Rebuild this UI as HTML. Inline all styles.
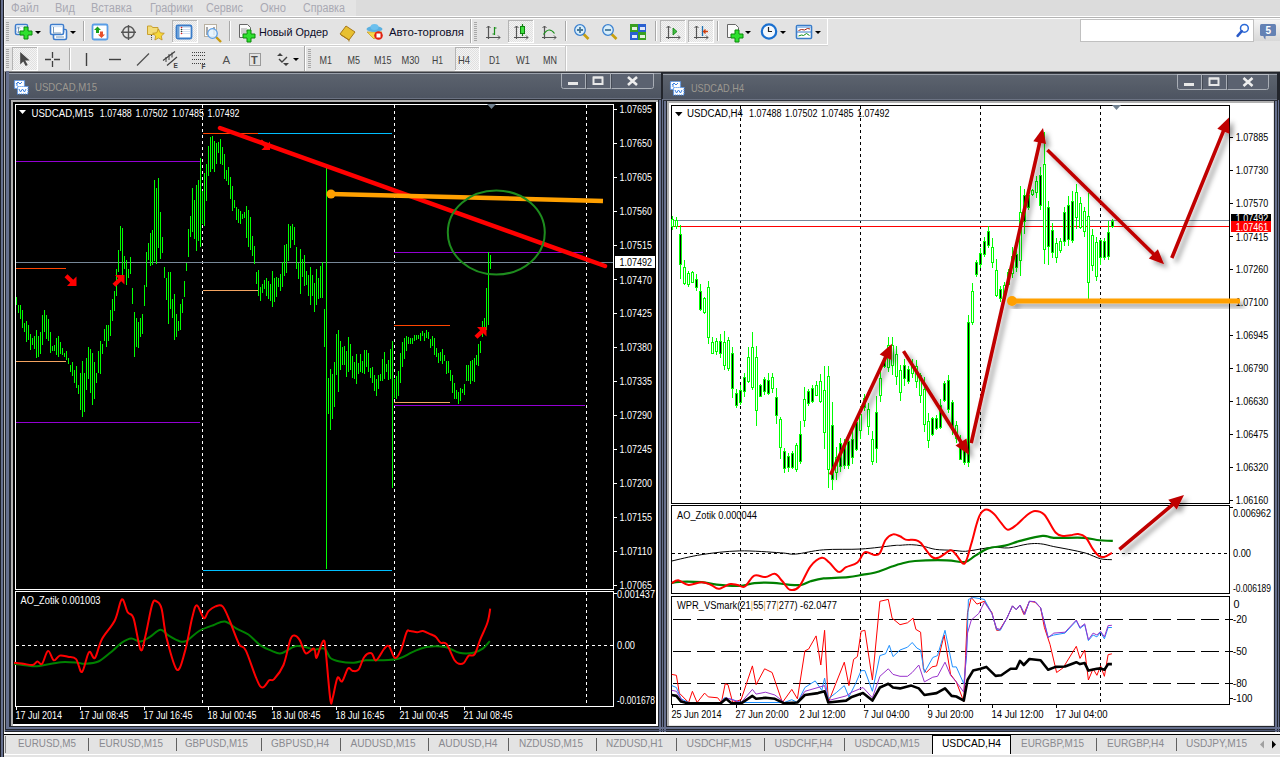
<!DOCTYPE html>
<html><head><meta charset="utf-8"><style>
html,body{margin:0;padding:0;width:1280px;height:757px;overflow:hidden;background:#e3e3e3}
svg{display:block;font-family:"Liberation Sans", sans-serif}
</style></head><body>
<svg width="1280" height="757" viewBox="0 0 1280 757">
<rect x="0" y="0" width="1280" height="757" fill="#e3e3e3" />
<rect x="0" y="0" width="1280" height="16" fill="#e4e4e4" />
<rect x="356" y="0" width="924" height="16" fill="#dcdcdc" />
<text x="11" y="12" fill="#a9a9b3" font-size="12.5" textLength="28" lengthAdjust="spacingAndGlyphs">Файл</text>
<text x="55" y="12" fill="#a9a9b3" font-size="12.5" textLength="20" lengthAdjust="spacingAndGlyphs">Вид</text>
<text x="91" y="12" fill="#a9a9b3" font-size="12.5" textLength="41" lengthAdjust="spacingAndGlyphs">Вставка</text>
<text x="150" y="12" fill="#a9a9b3" font-size="12.5" textLength="43" lengthAdjust="spacingAndGlyphs">Графики</text>
<text x="206" y="12" fill="#a9a9b3" font-size="12.5" textLength="37" lengthAdjust="spacingAndGlyphs">Сервис</text>
<text x="260" y="12" fill="#a9a9b3" font-size="12.5" textLength="26" lengthAdjust="spacingAndGlyphs">Окно</text>
<text x="303" y="12" fill="#a9a9b3" font-size="12.5" textLength="42" lengthAdjust="spacingAndGlyphs">Справка</text>
<line x1="0" y1="16.5" x2="1280" y2="16.5" stroke="#ffffff" stroke-width="1" />
<rect x="0" y="17" width="1280" height="54" fill="#e3e3e3" />
<line x1="827.5" y1="17" x2="827.5" y2="45" stroke="#ffffff" stroke-width="1" />
<line x1="4" y1="44.5" x2="828" y2="44.5" stroke="#ffffff" stroke-width="1" />
<line x1="4" y1="45.5" x2="828" y2="45.5" stroke="#d0d0d0" stroke-width="1" />
<line x1="4" y1="46.5" x2="566" y2="46.5" stroke="#ffffff" stroke-width="1" />
<line x1="566.5" y1="46" x2="566.5" y2="71" stroke="#ffffff" stroke-width="1" />
<line x1="565.5" y1="46" x2="565.5" y2="71" stroke="#c8c8c8" stroke-width="1" />
<line x1="0" y1="71.5" x2="1280" y2="71.5" stroke="#9c9c9c" stroke-width="1" />
<line x1="0" y1="72.5" x2="1280" y2="72.5" stroke="#6a6a6a" stroke-width="1" />
<rect x="0" y="0" width="4" height="757" fill="#1e1f24" />
<rect x="1" y="0" width="2" height="757" fill="#66708e" />
<line x1="4.5" y1="0" x2="4.5" y2="71" stroke="#f4f4f4" stroke-width="1" />
<line x1="4" y1="17.5" x2="1280" y2="17.5" stroke="#b4b4b4" stroke-width="1" />
<line x1="4" y1="18.5" x2="828" y2="18.5" stroke="#ffffff" stroke-width="1" />
<rect x="0" y="71" width="1280" height="664" fill="#22252c" />
<line x1="0" y1="71.5" x2="1280" y2="71.5" stroke="#8c8c8c" stroke-width="1" />
<line x1="4.5" y1="71" x2="4.5" y2="733" stroke="#b0b0b0" stroke-width="1" />
<line x1="6.5" y1="71" x2="6.5" y2="729" stroke="#66708e" stroke-width="1" />
<line x1="7.5" y1="71" x2="7.5" y2="729" stroke="#66708e" stroke-width="1" />
<line x1="8.5" y1="71" x2="8.5" y2="729" stroke="#66708e" stroke-width="1" />
<line x1="659.5" y1="99" x2="659.5" y2="732" stroke="#66708e" stroke-width="1" />
<line x1="660.5" y1="99" x2="660.5" y2="732" stroke="#66708e" stroke-width="1" />
<line x1="662.5" y1="99" x2="662.5" y2="732" stroke="#66708e" stroke-width="1" />
<line x1="664.5" y1="99" x2="664.5" y2="732" stroke="#66708e" stroke-width="1" />
<line x1="665.5" y1="99" x2="665.5" y2="732" stroke="#66708e" stroke-width="1" />
<line x1="1275.5" y1="100" x2="1275.5" y2="732" stroke="#66708e" stroke-width="1" />
<line x1="1276.5" y1="100" x2="1276.5" y2="732" stroke="#66708e" stroke-width="1" />
<line x1="1278.5" y1="100" x2="1278.5" y2="732" stroke="#66708e" stroke-width="1" />
<line x1="6" y1="727.5" x2="1280" y2="727.5" stroke="#66708e" stroke-width="1" />
<line x1="6" y1="728.5" x2="1280" y2="728.5" stroke="#66708e" stroke-width="1" />
<line x1="5" y1="730.5" x2="1280" y2="730.5" stroke="#4c5470" stroke-width="1" />
<line x1="4" y1="732.5" x2="1280" y2="732.5" stroke="#ffffff" stroke-width="1" />
<line x1="4" y1="733.5" x2="1280" y2="733.5" stroke="#ffffff" stroke-width="1" />
<line x1="4" y1="734.5" x2="1280" y2="734.5" stroke="#000000" stroke-width="1" />
<defs><linearGradient id="tg9" x1="0" y1="0" x2="0" y2="1"><stop offset="0" stop-color="#5c636e"/><stop offset="1" stop-color="#4d5461"/></linearGradient></defs>
<line x1="9" y1="72.5" x2="661" y2="72.5" stroke="#3a3d44" stroke-width="1" />
<line x1="9" y1="73.5" x2="661" y2="73.5" stroke="#9aa0aa" stroke-width="1" />
<rect x="9" y="74" width="652" height="24" fill="url(#tg9)" />
<line x1="9" y1="98.5" x2="661" y2="98.5" stroke="#6b7282" stroke-width="1" />
<line x1="9" y1="99.5" x2="661" y2="99.5" stroke="#2c3038" stroke-width="1" />
<rect x="14.5" y="80.5" width="10" height="8" fill="#ffffff" stroke="#4a90f0" stroke-width="1.2" stroke-dasharray="1.2,0.8"/>
<path d="M16,84 l2,-2 l2,2 l2,-2 M17,83 v3" stroke="#3a80e0" stroke-width="1" fill="none"/>
<rect x="17.5" y="86.5" width="10.5" height="7.5" fill="#ffffff" stroke="#4a90f0" stroke-width="1.2" stroke-dasharray="1.2,0.8"/>
<polyline points="19,89 20.5,92 22.5,89 24.5,92 26,89" fill="none" stroke="#3a80e0" stroke-width="1"/>
<text x="35" y="91" fill="#9c9890" font-size="11.5" textLength="62" lengthAdjust="spacingAndGlyphs">USDCAD,M15</text>
<path d="M561.5,73 V86.5 q0,2 2,2 H651.5 q2,0 2,-2 V73" fill="#5b6270" stroke="#a9aeb6" stroke-width="1"/>
<path d="M561,73.5 H654" stroke="#b8bcc4" stroke-width="1"/>
<path d="M585.5,73 V88.5 M610.5,73 V88.5" stroke="#a9aeb6" stroke-width="1"/>
<path d="M586.5,74 V88.5 M611.5,74 V88.5" stroke="#454b56" stroke-width="1"/>
<rect x="568" y="82" width="10" height="3" fill="#e8e8e8" />
<rect x="593.5" y="77.5" width="9" height="6.5" fill="none" stroke="#e8e8e8" stroke-width="2"/>
<rect x="593" y="76.5" width="10" height="2" fill="#e8e8e8"/>
<path d="M628.0,77 L637.0,85 M637.0,77 L628.0,85" stroke="#eeeeee" stroke-width="2.6"/>
<defs><linearGradient id="tg663" x1="0" y1="0" x2="0" y2="1"><stop offset="0" stop-color="#5c636e"/><stop offset="1" stop-color="#4d5461"/></linearGradient></defs>
<line x1="663" y1="73.5" x2="1277" y2="73.5" stroke="#3a3d44" stroke-width="1" />
<line x1="663" y1="74.5" x2="1277" y2="74.5" stroke="#9aa0aa" stroke-width="1" />
<rect x="663" y="75" width="614" height="24" fill="url(#tg663)" />
<line x1="663" y1="99.5" x2="1277" y2="99.5" stroke="#6b7282" stroke-width="1" />
<line x1="663" y1="100.5" x2="1277" y2="100.5" stroke="#2c3038" stroke-width="1" />
<rect x="670.5" y="81.5" width="10" height="8" fill="#ffffff" stroke="#4a90f0" stroke-width="1.2" stroke-dasharray="1.2,0.8"/>
<path d="M672,85 l2,-2 l2,2 l2,-2 M673,84 v3" stroke="#3a80e0" stroke-width="1" fill="none"/>
<rect x="673.5" y="87.5" width="10.5" height="7.5" fill="#ffffff" stroke="#4a90f0" stroke-width="1.2" stroke-dasharray="1.2,0.8"/>
<polyline points="675,90 676.5,93 678.5,90 680.5,93 682,90" fill="none" stroke="#3a80e0" stroke-width="1"/>
<text x="691" y="92" fill="#9c9890" font-size="11.5" textLength="53" lengthAdjust="spacingAndGlyphs">USDCAD,H4</text>
<path d="M1177.5,74 V87.5 q0,2 2,2 H1266.5 q2,0 2,-2 V74" fill="#5b6270" stroke="#a9aeb6" stroke-width="1"/>
<path d="M1177,74.5 H1269" stroke="#b8bcc4" stroke-width="1"/>
<path d="M1201.5,74 V89.5 M1226.5,74 V89.5" stroke="#a9aeb6" stroke-width="1"/>
<path d="M1202.5,75 V89.5 M1227.5,75 V89.5" stroke="#454b56" stroke-width="1"/>
<rect x="1184" y="83" width="10" height="3" fill="#e8e8e8" />
<rect x="1209.5" y="78.5" width="9" height="6.5" fill="none" stroke="#e8e8e8" stroke-width="2"/>
<rect x="1209" y="77.5" width="10" height="2" fill="#e8e8e8"/>
<path d="M1243.5,78 L1252.5,86 M1252.5,78 L1243.5,86" stroke="#eeeeee" stroke-width="2.6"/>
<rect x="11" y="100" width="647" height="626" fill="#b0b0b0" />
<rect x="13" y="102" width="645" height="624" fill="#ffffff" />
<rect x="13" y="102" width="643" height="622" fill="#000000" />
<rect x="667" y="101" width="607" height="625" fill="#b0b0b0" />
<rect x="669" y="103" width="605" height="623" fill="#e4e4e4" />
<rect x="669" y="103" width="604" height="622" fill="#ffffff" />
<defs><pattern id="chk" width="2" height="2" patternUnits="userSpaceOnUse"><rect width="2" height="2" fill="#f4f4f4"/><rect width="1" height="1" fill="#e0e0e0"/><rect x="1" y="1" width="1" height="1" fill="#e0e0e0"/></pattern></defs>
<rect x="6" y="22" width="3" height="1" fill="#a8a8a8"/>
<rect x="6" y="24" width="3" height="1" fill="#a8a8a8"/>
<rect x="6" y="26" width="3" height="1" fill="#a8a8a8"/>
<rect x="6" y="28" width="3" height="1" fill="#a8a8a8"/>
<rect x="6" y="30" width="3" height="1" fill="#a8a8a8"/>
<rect x="6" y="32" width="3" height="1" fill="#a8a8a8"/>
<rect x="6" y="34" width="3" height="1" fill="#a8a8a8"/>
<rect x="6" y="36" width="3" height="1" fill="#a8a8a8"/>
<rect x="6" y="38" width="3" height="1" fill="#a8a8a8"/>
<rect x="6" y="40" width="3" height="1" fill="#a8a8a8"/>
<rect x="15.5" y="24.5" width="12" height="10" rx="1.5" fill="#ffffff" stroke="#3d7ccc" stroke-width="1.6"/>
<rect x="16.5" y="25.2" width="10" height="2" fill="#cfe2f7"/>
<path d="M18.5,27 v6 M17,28.5 l1.5,-1.5 l1.5,1.5 M17,31.5 l1.5,1.5 l1.5,-1.5" stroke="#7a9ab8" stroke-width="1" fill="none"/>
<path d="M24.0,27 h4.0 v4.0 h4.0 v4.0 h-4.0 v4.0 h-4.0 v-4.0 h-4.0 v-4.0 h4.0 z" fill="#2ee02e" stroke="#0a8a0a" stroke-width="1"/>
<path d="M35,31 h6 l-3,3 z" fill="#000"/>
<rect x="53.5" y="29.5" width="13" height="10" rx="1.5" fill="#ffffff" stroke="#3d7ccc" stroke-width="1.6"/>
<rect x="54.5" y="30.2" width="11" height="2" fill="#cfe2f7"/>
<rect x="50.5" y="24.5" width="13" height="10" rx="1.5" fill="#ffffff" stroke="#3d7ccc" stroke-width="1.6"/>
<rect x="51.5" y="25.2" width="11" height="2" fill="#cfe2f7"/>
<path d="M53,33 h8 M53.5,27 v6" stroke="#7a9ab8" stroke-width="1"/><path d="M56,37 h8" stroke="#7a9ab8" stroke-width="1"/>
<path d="M70,31 h6 l-3,3 z" fill="#000"/>
<line x1="83.5" y1="21" x2="83.5" y2="41" stroke="#a8a8a8" stroke-width="1" />
<line x1="84.5" y1="21" x2="84.5" y2="41" stroke="#ffffff" stroke-width="1" />
<rect x="92.5" y="24.5" width="15" height="15" rx="1.5" fill="#fff" stroke="#5a9ee6" stroke-width="1.8"/>
<path d="M97.5,26.5 l-3.5,3.5 h2 v3 h3 v-3 h2 z" fill="#1aa01a"/><path d="M101.5,38 l3.5,-3.5 h-2 v-3 h-3 v3 h-2 z" fill="#e8502a"/>
<circle cx="128.5" cy="32.3" r="5.8" fill="none" stroke="#555" stroke-width="1.4"/><path d="M128.5,25 v15 M121,32.3 h15" stroke="#555" stroke-width="1.4"/>
<path d="M147.5,26 h4 l1,1.5 h5.5 v7 h-10.5 z" fill="#f3dc78" stroke="#c8a030" stroke-width="1"/>
<path d="M158.5,29 l1.8,3.8 l4,0.5 l-3,2.7 l0.8,4 l-3.6,-2 l-3.6,2 l0.8,-4 l-3,-2.7 l4,-0.5 z" fill="#f6d83a" stroke="#c09020" stroke-width="0.8"/>
<path d="M151.5,35 v5" stroke="#333" stroke-width="1" stroke-dasharray="1,1.2"/>
<rect x="172" y="20" width="25" height="22" fill="url(#chk)"/>
<line x1="172" y1="20.5" x2="197" y2="20.5" stroke="#b4b4b4" stroke-width="1" />
<line x1="172.5" y1="20" x2="172.5" y2="42" stroke="#b4b4b4" stroke-width="1" />
<line x1="172" y1="42.5" x2="198" y2="42.5" stroke="#ffffff" stroke-width="1" />
<line x1="197.5" y1="20" x2="197.5" y2="43" stroke="#ffffff" stroke-width="1" />
<rect x="176.5" y="25.5" width="15" height="13" rx="1.5" fill="#fff" stroke="#3a7cc8" stroke-width="1.8"/><rect x="177" y="26" width="2.5" height="12" fill="#6a9fd8"/>
<path d="M181,27.5 h9 M181,29.5 h9 M181,31.5 h9 M181,33.5 h9" stroke="#c8d8f0" stroke-width="0.8"/>
<circle cx="181.5" cy="27.5" r="0.8" fill="#e02020"/>
<circle cx="181.5" cy="29.5" r="0.8" fill="#304030"/>
<circle cx="181.5" cy="31.5" r="0.8" fill="#304030"/>
<circle cx="181.5" cy="33.5" r="0.8" fill="#e02020"/>
<rect x="204.5" y="24.5" width="12" height="12" fill="#fafafa" stroke="#b8b0a0" stroke-width="1"/><path d="M207,27 v8 M214,27 v8" stroke="#555" stroke-width="1"/>
<path d="M216,37 l5,5" stroke="#c89a10" stroke-width="2.4"/><circle cx="212.5" cy="33.5" r="4.8" fill="#e4f2fb" fill-opacity="0.85" stroke="#5a9ee6" stroke-width="1.2"/>
<line x1="229.5" y1="21" x2="229.5" y2="41" stroke="#a8a8a8" stroke-width="1" />
<line x1="230.5" y1="21" x2="230.5" y2="41" stroke="#ffffff" stroke-width="1" />
<path d="M239.5,24.5 h8 l3,3 v10 h-11 z" fill="#fafafa" stroke="#666" stroke-width="1"/><path d="M241,29 h6 M241,31 h6 M241,33 h5" stroke="#888" stroke-width="0.8"/>
<path d="M247.0,30 h4.0 v4.0 h4.0 v4.0 h-4.0 v4.0 h-4.0 v-4.0 h-4.0 v-4.0 h4.0 z" fill="#2ee02e" stroke="#0a8a0a" stroke-width="1"/>
<text x="259" y="36" fill="#0c0c28" font-size="11" textLength="69" lengthAdjust="spacingAndGlyphs">Новый Ордер</text>
<path d="M340,34 l6,-8 l9,6 l-6,8 z" fill="#e8c030" stroke="#a87818" stroke-width="1"/><path d="M341,35 l8,5 l0,1.5" stroke="#a87818" fill="none"/>
<path d="M367,32 l7,7 l8,-7 z" fill="#f5d84a" stroke="#c8a030" stroke-width="0.8"/><ellipse cx="374.5" cy="29" rx="8" ry="3" fill="#5ab0e0"/><ellipse cx="374.5" cy="27" rx="4" ry="3" fill="#6cc0ee"/>
<circle cx="378.5" cy="35.5" r="4.3" fill="#e02010"/><rect x="376.5" y="33.5" width="4" height="4" fill="#fff"/>
<text x="389" y="36" fill="#0c0c28" font-size="11" textLength="75" lengthAdjust="spacingAndGlyphs">Авто-торговля</text>
<line x1="470.5" y1="19" x2="470.5" y2="43" stroke="#a8a8a8" stroke-width="1" />
<line x1="471.5" y1="19" x2="471.5" y2="43" stroke="#ffffff" stroke-width="1" />
<rect x="474" y="22" width="3" height="1" fill="#a8a8a8"/>
<rect x="474" y="24" width="3" height="1" fill="#a8a8a8"/>
<rect x="474" y="26" width="3" height="1" fill="#a8a8a8"/>
<rect x="474" y="28" width="3" height="1" fill="#a8a8a8"/>
<rect x="474" y="30" width="3" height="1" fill="#a8a8a8"/>
<rect x="474" y="32" width="3" height="1" fill="#a8a8a8"/>
<rect x="474" y="34" width="3" height="1" fill="#a8a8a8"/>
<rect x="474" y="36" width="3" height="1" fill="#a8a8a8"/>
<rect x="474" y="38" width="3" height="1" fill="#a8a8a8"/>
<rect x="474" y="40" width="3" height="1" fill="#a8a8a8"/>
<path d="M488.5,26 v13 M486,37.5 h14" stroke="#555" stroke-width="1.2" fill="none"/><path d="M486.5,28 l2,-2 l2,2 M498,35.5 l2,2 l-2,2" stroke="#555" stroke-width="1" fill="none"/>
<path d="M494.5,27 v8 M494.5,28 h2 M492.5,34 h2" stroke="#1a901a" stroke-width="1.2" fill="none"/>
<rect x="508" y="20" width="25" height="22" fill="url(#chk)"/>
<line x1="508" y1="20.5" x2="533" y2="20.5" stroke="#b4b4b4" stroke-width="1" />
<line x1="508.5" y1="20" x2="508.5" y2="42" stroke="#b4b4b4" stroke-width="1" />
<line x1="508" y1="42.5" x2="534" y2="42.5" stroke="#ffffff" stroke-width="1" />
<line x1="533.5" y1="20" x2="533.5" y2="43" stroke="#ffffff" stroke-width="1" />
<path d="M516.5,26 v13 M514,37.5 h14" stroke="#555" stroke-width="1.2" fill="none"/><path d="M514.5,28 l2,-2 l2,2 M526,35.5 l2,2 l-2,2" stroke="#555" stroke-width="1" fill="none"/>
<path d="M522.5,24 v12" stroke="#108010" stroke-width="1.2"/><rect x="520.5" y="26.5" width="4" height="7" fill="#40e040" stroke="#108010" stroke-width="1"/>
<path d="M544.5,26 v13 M542,37.5 h14" stroke="#555" stroke-width="1.2" fill="none"/><path d="M542.5,28 l2,-2 l2,2 M554,35.5 l2,2 l-2,2" stroke="#555" stroke-width="1" fill="none"/>
<path d="M543.5,34.5 Q549,26 554.5,33.5" stroke="#1a901a" stroke-width="1.2" fill="none"/>
<line x1="565.5" y1="21" x2="565.5" y2="41" stroke="#a8a8a8" stroke-width="1" />
<line x1="566.5" y1="21" x2="566.5" y2="41" stroke="#ffffff" stroke-width="1" />
<path d="M583,33.5 l5.5,5.5" stroke="#c8a010" stroke-width="2.6"/><circle cx="580" cy="30" r="5.3" fill="#d8eefa" stroke="#3a80d0" stroke-width="1.3"/>
<path d="M577,30 h6 M580,27 v6" stroke="#4a7898" stroke-width="1.8"/>
<path d="M611,33.5 l5.5,5.5" stroke="#c8a010" stroke-width="2.6"/><circle cx="608" cy="30" r="5.3" fill="#d8eefa" stroke="#3a80d0" stroke-width="1.3"/>
<path d="M605,30 h6" stroke="#4a7898" stroke-width="1.8"/>
<rect x="630" y="24" width="8" height="8" fill="#3aa020"/><rect x="632" y="27" width="5" height="3" fill="#fff" fill-opacity="0.85"/>
<rect x="638" y="24" width="8" height="8" fill="#2a60d0"/><rect x="640" y="27" width="5" height="3" fill="#fff" fill-opacity="0.85"/>
<rect x="630" y="32" width="8" height="8" fill="#2a60d0"/><rect x="632" y="35" width="5" height="3" fill="#fff" fill-opacity="0.85"/>
<rect x="638" y="32" width="8" height="8" fill="#3aa020"/><rect x="640" y="35" width="5" height="3" fill="#fff" fill-opacity="0.85"/>
<line x1="655.5" y1="21" x2="655.5" y2="41" stroke="#a8a8a8" stroke-width="1" />
<line x1="656.5" y1="21" x2="656.5" y2="41" stroke="#ffffff" stroke-width="1" />
<rect x="660" y="20" width="25" height="22" fill="url(#chk)"/>
<line x1="660" y1="20.5" x2="685" y2="20.5" stroke="#b4b4b4" stroke-width="1" />
<line x1="660.5" y1="20" x2="660.5" y2="42" stroke="#b4b4b4" stroke-width="1" />
<line x1="660" y1="42.5" x2="686" y2="42.5" stroke="#ffffff" stroke-width="1" />
<line x1="685.5" y1="20" x2="685.5" y2="43" stroke="#ffffff" stroke-width="1" />
<path d="M668.5,26 v13 M666,37.5 h14" stroke="#555" stroke-width="1.2" fill="none"/><path d="M666.5,28 l2,-2 l2,2 M678,35.5 l2,2 l-2,2" stroke="#555" stroke-width="1" fill="none"/>
<path d="M673,28 l4,3.5 l-4,3.5 z" fill="#40c040" stroke="#108010" stroke-width="0.8"/>
<rect x="688" y="20" width="25" height="22" fill="url(#chk)"/>
<line x1="688" y1="20.5" x2="713" y2="20.5" stroke="#b4b4b4" stroke-width="1" />
<line x1="688.5" y1="20" x2="688.5" y2="42" stroke="#b4b4b4" stroke-width="1" />
<line x1="688" y1="42.5" x2="714" y2="42.5" stroke="#ffffff" stroke-width="1" />
<line x1="713.5" y1="20" x2="713.5" y2="43" stroke="#ffffff" stroke-width="1" />
<path d="M696.5,26 v13 M694,37.5 h14" stroke="#555" stroke-width="1.2" fill="none"/><path d="M694.5,28 l2,-2 l2,2 M706,35.5 l2,2 l-2,2" stroke="#555" stroke-width="1" fill="none"/>
<path d="M702.5,26 v10" stroke="#2070b0" stroke-width="1.3"/><path d="M708,31.5 h-4 M705.5,29.5 l-2,2 l2,2" stroke="#d04010" stroke-width="1.3" fill="none"/>
<line x1="717.5" y1="21" x2="717.5" y2="41" stroke="#a8a8a8" stroke-width="1" />
<line x1="718.5" y1="21" x2="718.5" y2="41" stroke="#ffffff" stroke-width="1" />
<path d="M727.5,24.5 h8 l3,3 v10 h-11 z" fill="#fafafa" stroke="#666" stroke-width="1"/>
<path d="M735.0,30 h4.0 v4.0 h4.0 v4.0 h-4.0 v4.0 h-4.0 v-4.0 h-4.0 v-4.0 h4.0 z" fill="#2ee02e" stroke="#0a8a0a" stroke-width="1"/>
<path d="M745,31 h6 l-3,3 z" fill="#000"/>
<circle cx="769" cy="31.5" r="7.2" fill="#f4f8fc" stroke="#1a70d0" stroke-width="2.2"/><path d="M768.5,27 v4.5 h3.5" stroke="#222" stroke-width="1.2" fill="none"/>
<path d="M780,31 h6 l-3,3 z" fill="#000"/>
<rect x="796.5" y="25.5" width="15" height="13" rx="1" fill="#fff" stroke="#3a7cc8" stroke-width="1.6"/><rect x="797" y="26" width="14" height="2" fill="#9cc4ee"/><path d="M797,32 h14" stroke="#3a7cc8" stroke-width="1"/>
<path d="M798.5,30.5 l3,-1 l3,0.5 l3,-1.5 l2.5,0.5" stroke="#a02010" stroke-width="1" fill="none"/><path d="M798.5,36 l3,-1 l2,0.5 l3,-2 l3,2" stroke="#10901a" stroke-width="1" fill="none"/>
<path d="M815,31 h6 l-3,3 z" fill="#000"/>
<line x1="828" y1="17.5" x2="1280" y2="17.5" stroke="#b4b4b4" stroke-width="1" />
<line x1="828" y1="18.5" x2="1280" y2="18.5" stroke="#ffffff" stroke-width="1" />
<rect x="1080.5" y="19.5" width="173" height="22" fill="#fff" stroke="#c0c0c0" stroke-width="1"/>
<circle cx="1244.4" cy="28.3" r="3.9" fill="none" stroke="#2a6ad8" stroke-width="1.5"/><path d="M1241.8,31.2 l-4.2,4.6" stroke="#2a5ac8" stroke-width="2.6" stroke-linecap="round"/>
<defs><linearGradient id="nb" x1="0" y1="0" x2="0" y2="1"><stop offset="0" stop-color="#f4f4f4"/><stop offset="1" stop-color="#d8d8d8"/></linearGradient></defs>
<rect x="1254" y="20" width="26" height="21" fill="url(#nb)"/>
<rect x="1260" y="24" width="16" height="12" rx="1.5" fill="#6482b4"/><path d="M1263,35 q0.5,3 2.5,4.5 q-0.5,-2 0.5,-4.5 z" fill="#6482b4"/>
<text x="1265.5" y="33.6" fill="#ffffff" font-size="10" font-weight="bold">5</text>
<rect x="6" y="49" width="3" height="1" fill="#a8a8a8"/>
<rect x="6" y="51" width="3" height="1" fill="#a8a8a8"/>
<rect x="6" y="53" width="3" height="1" fill="#a8a8a8"/>
<rect x="6" y="55" width="3" height="1" fill="#a8a8a8"/>
<rect x="6" y="57" width="3" height="1" fill="#a8a8a8"/>
<rect x="6" y="59" width="3" height="1" fill="#a8a8a8"/>
<rect x="6" y="61" width="3" height="1" fill="#a8a8a8"/>
<rect x="6" y="63" width="3" height="1" fill="#a8a8a8"/>
<rect x="6" y="65" width="3" height="1" fill="#a8a8a8"/>
<rect x="6" y="67" width="3" height="1" fill="#a8a8a8"/>
<rect x="12" y="47" width="25" height="23" fill="url(#chk)"/>
<line x1="12" y1="47.5" x2="37" y2="47.5" stroke="#b4b4b4" stroke-width="1" />
<line x1="12.5" y1="47" x2="12.5" y2="70" stroke="#b4b4b4" stroke-width="1" />
<line x1="12" y1="70.5" x2="38" y2="70.5" stroke="#ffffff" stroke-width="1" />
<line x1="37.5" y1="47" x2="37.5" y2="71" stroke="#ffffff" stroke-width="1" />
<path d="M20.2,52 v12.5 l3,-3 l2.5,4.5 l2,-1 l-2.5,-4.5 h4.5 z" fill="#484848"/>
<path d="M52.5,52 v6 M52.5,61 v6 M45,59.5 h6 M54,59.5 h6" stroke="#404040" stroke-width="1.3"/>
<line x1="69.5" y1="48" x2="69.5" y2="70" stroke="#a8a8a8" stroke-width="1" />
<line x1="70.5" y1="48" x2="70.5" y2="70" stroke="#ffffff" stroke-width="1" />
<path d="M86.5,53 v13" stroke="#404040" stroke-width="1.4"/>
<path d="M109,59.5 h12" stroke="#404040" stroke-width="1.4"/>
<path d="M137,65.5 l12,-12" stroke="#505050" stroke-width="1.2"/>
<path d="M163,60.5 l12,-9 M167,65.5 l10,-8.5" stroke="#404040" stroke-width="1.2"/><path d="M166,62 v-5 M169,60 v-6 M172,57.5 v-5" stroke="#404040" stroke-width="1"/>
<text x="173.5" y="67.5" fill="#404040" font-size="6.5" font-weight="bold">E</text>
<path d="M192,52.5 h13" stroke="#404040" stroke-width="1" stroke-dasharray="1,1"/>
<path d="M192,55.5 h13" stroke="#404040" stroke-width="1" stroke-dasharray="1,1"/>
<path d="M192,59.5 h13" stroke="#404040" stroke-width="1" stroke-dasharray="1,1"/>
<path d="M192,63.5 h13" stroke="#404040" stroke-width="1" stroke-dasharray="1,1"/>
<text x="201.5" y="68.5" fill="#404040" font-size="6.5" font-weight="bold">F</text>
<text x="222.5" y="64" fill="#505050" font-size="11.5" >A</text>
<rect x="249.5" y="53.5" width="11" height="12" fill="none" stroke="#505050" stroke-width="1" stroke-dasharray="1,1"/>
<text x="251" y="64" fill="#505050" font-size="11" font-weight="bold">T</text>
<path d="M280,53 l3,3 h-6 z M286,66 l3,-3 h-6 z" fill="#404040"/><path d="M279,59 l3,3 l5,-5" stroke="#404040" stroke-width="1.4" fill="none"/>
<path d="M293,58 h6 l-3,3 z" fill="#000"/>
<line x1="304.5" y1="46" x2="304.5" y2="71" stroke="#a8a8a8" stroke-width="1" />
<line x1="305.5" y1="46" x2="305.5" y2="71" stroke="#ffffff" stroke-width="1" />
<rect x="308" y="49" width="3" height="1" fill="#a8a8a8"/>
<rect x="308" y="51" width="3" height="1" fill="#a8a8a8"/>
<rect x="308" y="53" width="3" height="1" fill="#a8a8a8"/>
<rect x="308" y="55" width="3" height="1" fill="#a8a8a8"/>
<rect x="308" y="57" width="3" height="1" fill="#a8a8a8"/>
<rect x="308" y="59" width="3" height="1" fill="#a8a8a8"/>
<rect x="308" y="61" width="3" height="1" fill="#a8a8a8"/>
<rect x="308" y="63" width="3" height="1" fill="#a8a8a8"/>
<rect x="308" y="65" width="3" height="1" fill="#a8a8a8"/>
<rect x="308" y="67" width="3" height="1" fill="#a8a8a8"/>
<text x="319.5" y="63.5" fill="#404040" font-size="10.5" textLength="12.5" lengthAdjust="spacingAndGlyphs">M1</text>
<text x="347.5" y="63.5" fill="#404040" font-size="10.5" textLength="12.5" lengthAdjust="spacingAndGlyphs">M5</text>
<text x="374" y="63.5" fill="#404040" font-size="10.5" textLength="17.5" lengthAdjust="spacingAndGlyphs">M15</text>
<text x="401.5" y="63.5" fill="#404040" font-size="10.5" textLength="18" lengthAdjust="spacingAndGlyphs">M30</text>
<text x="432" y="63.5" fill="#404040" font-size="10.5" textLength="11" lengthAdjust="spacingAndGlyphs">H1</text>
<rect x="455" y="47" width="24" height="23" fill="url(#chk)"/>
<line x1="455" y1="47.5" x2="479" y2="47.5" stroke="#b4b4b4" stroke-width="1" />
<line x1="455.5" y1="47" x2="455.5" y2="70" stroke="#b4b4b4" stroke-width="1" />
<line x1="455" y1="70.5" x2="480" y2="70.5" stroke="#ffffff" stroke-width="1" />
<line x1="479.5" y1="47" x2="479.5" y2="71" stroke="#ffffff" stroke-width="1" />
<text x="458" y="63.5" fill="#404040" font-size="10.5" textLength="12" lengthAdjust="spacingAndGlyphs">H4</text>
<text x="489" y="63.5" fill="#404040" font-size="10.5" textLength="11" lengthAdjust="spacingAndGlyphs">D1</text>
<text x="516" y="63.5" fill="#404040" font-size="10.5" textLength="14" lengthAdjust="spacingAndGlyphs">W1</text>
<text x="543" y="63.5" fill="#404040" font-size="10.5" textLength="14" lengthAdjust="spacingAndGlyphs">MN</text>
<g shape-rendering="crispEdges">
<rect x="15.5" y="104.5" width="598" height="485" fill="none" stroke="#fff"/>
<rect x="15.5" y="591.5" width="598" height="115" fill="none" stroke="#fff"/>
<path d="M202.5,105 V589" stroke="#fff" stroke-dasharray="3,3"/>
<path d="M202.5,592 V706" stroke="#fff" stroke-dasharray="3,3"/>
<path d="M394.5,105 V589" stroke="#fff" stroke-dasharray="3,3"/>
<path d="M394.5,592 V706" stroke="#fff" stroke-dasharray="3,3"/>
<path d="M586.5,105 V589" stroke="#fff" stroke-dasharray="3,3"/>
<path d="M586.5,592 V706" stroke="#fff" stroke-dasharray="3,3"/>
<path d="M16,645.5 H613" stroke="#fff" stroke-dasharray="3,3"/>
<path d="M614,109.5 h3" stroke="#fff"/>
<text x="619.5" y="113.0" fill="#ffffff" font-size="10" textLength="32.5" lengthAdjust="spacingAndGlyphs">1.07695</text>
<path d="M614,143.5 h3" stroke="#fff"/>
<text x="619.5" y="147.0" fill="#ffffff" font-size="10" textLength="32.5" lengthAdjust="spacingAndGlyphs">1.07650</text>
<path d="M614,177.5 h3" stroke="#fff"/>
<text x="619.5" y="181.0" fill="#ffffff" font-size="10" textLength="32.5" lengthAdjust="spacingAndGlyphs">1.07605</text>
<path d="M614,211.5 h3" stroke="#fff"/>
<text x="619.5" y="215.0" fill="#ffffff" font-size="10" textLength="32.5" lengthAdjust="spacingAndGlyphs">1.07560</text>
<path d="M614,245.5 h3" stroke="#fff"/>
<text x="619.5" y="249.0" fill="#ffffff" font-size="10" textLength="32.5" lengthAdjust="spacingAndGlyphs">1.07515</text>
<path d="M614,279.5 h3" stroke="#fff"/>
<text x="619.5" y="284.0" fill="#ffffff" font-size="10" textLength="32.5" lengthAdjust="spacingAndGlyphs">1.07470</text>
<path d="M614,313.5 h3" stroke="#fff"/>
<text x="619.5" y="317.0" fill="#ffffff" font-size="10" textLength="32.5" lengthAdjust="spacingAndGlyphs">1.07425</text>
<path d="M614,347.5 h3" stroke="#fff"/>
<text x="619.5" y="351.0" fill="#ffffff" font-size="10" textLength="32.5" lengthAdjust="spacingAndGlyphs">1.07380</text>
<path d="M614,381.5 h3" stroke="#fff"/>
<text x="619.5" y="385.0" fill="#ffffff" font-size="10" textLength="32.5" lengthAdjust="spacingAndGlyphs">1.07335</text>
<path d="M614,415.5 h3" stroke="#fff"/>
<text x="619.5" y="419.0" fill="#ffffff" font-size="10" textLength="32.5" lengthAdjust="spacingAndGlyphs">1.07290</text>
<path d="M614,449.5 h3" stroke="#fff"/>
<text x="619.5" y="453.0" fill="#ffffff" font-size="10" textLength="32.5" lengthAdjust="spacingAndGlyphs">1.07245</text>
<path d="M614,483.5 h3" stroke="#fff"/>
<text x="619.5" y="487.0" fill="#ffffff" font-size="10" textLength="32.5" lengthAdjust="spacingAndGlyphs">1.07200</text>
<path d="M614,517.5 h3" stroke="#fff"/>
<text x="619.5" y="521.0" fill="#ffffff" font-size="10" textLength="32.5" lengthAdjust="spacingAndGlyphs">1.07155</text>
<path d="M614,551.5 h3" stroke="#fff"/>
<text x="619.5" y="555.0" fill="#ffffff" font-size="10" textLength="32.5" lengthAdjust="spacingAndGlyphs">1.07110</text>
<path d="M614,585.5 h3" stroke="#fff"/>
<text x="619.5" y="589.0" fill="#ffffff" font-size="10" textLength="32.5" lengthAdjust="spacingAndGlyphs">1.07065</text>
<rect x="615" y="256" width="40" height="12" fill="#ffffff"/>
<text x="619.5" y="265.8" fill="#000000" font-size="10" textLength="32.5" lengthAdjust="spacingAndGlyphs">1.07492</text>
<path d="M614,593.5 h3" stroke="#fff"/>
<text x="617" y="597.5" fill="#ffffff" font-size="10" textLength="38" lengthAdjust="spacingAndGlyphs">0.001437</text>
<text x="617" y="649" fill="#ffffff" font-size="10" textLength="18" lengthAdjust="spacingAndGlyphs">0.00</text>
<text x="617" y="703.5" fill="#ffffff" font-size="10" textLength="38" lengthAdjust="spacingAndGlyphs">-0.001678</text>
<path d="M16.5,707 v3" stroke="#fff"/>
<text x="15.5" y="719" fill="#ffffff" font-size="10" textLength="46.5" lengthAdjust="spacingAndGlyphs">17 Jul 2014</text>
<path d="M80.5,707 v3" stroke="#fff"/>
<text x="79.5" y="719" fill="#ffffff" font-size="10" textLength="49" lengthAdjust="spacingAndGlyphs">17 Jul 08:45</text>
<path d="M144.5,707 v3" stroke="#fff"/>
<text x="143.5" y="719" fill="#ffffff" font-size="10" textLength="49" lengthAdjust="spacingAndGlyphs">17 Jul 16:45</text>
<path d="M208.5,707 v3" stroke="#fff"/>
<text x="207.5" y="719" fill="#ffffff" font-size="10" textLength="49" lengthAdjust="spacingAndGlyphs">18 Jul 00:45</text>
<path d="M272.5,707 v3" stroke="#fff"/>
<text x="271.5" y="719" fill="#ffffff" font-size="10" textLength="49" lengthAdjust="spacingAndGlyphs">18 Jul 08:45</text>
<path d="M336.5,707 v3" stroke="#fff"/>
<text x="335.5" y="719" fill="#ffffff" font-size="10" textLength="49" lengthAdjust="spacingAndGlyphs">18 Jul 16:45</text>
<path d="M400.5,707 v3" stroke="#fff"/>
<text x="399.5" y="719" fill="#ffffff" font-size="10" textLength="49" lengthAdjust="spacingAndGlyphs">21 Jul 00:45</text>
<path d="M464.5,707 v3" stroke="#fff"/>
<text x="463.5" y="719" fill="#ffffff" font-size="10" textLength="49" lengthAdjust="spacingAndGlyphs">21 Jul 08:45</text>
</g>
<path d="M19,110 h7 l-3.5,4 z" fill="#fff"/>
<text x="31.5" y="116.5" fill="#ffffff" font-size="10" textLength="62" lengthAdjust="spacingAndGlyphs">USDCAD,M15</text>
<text x="99.75" y="116.5" fill="#ffffff" font-size="10" textLength="32" lengthAdjust="spacingAndGlyphs">1.07488</text>
<text x="135.6" y="116.5" fill="#ffffff" font-size="10" textLength="32" lengthAdjust="spacingAndGlyphs">1.07502</text>
<text x="171.9" y="116.5" fill="#ffffff" font-size="10" textLength="32" lengthAdjust="spacingAndGlyphs">1.07485</text>
<text x="207.5" y="116.5" fill="#ffffff" font-size="10" textLength="32" lengthAdjust="spacingAndGlyphs">1.07492</text>
<text x="20.5" y="604" fill="#ffffff" font-size="10" textLength="80" lengthAdjust="spacingAndGlyphs">AO_Zotik 0.001003</text>
<path d="M487,104 h9 l-4.5,5 z" fill="#708090"/>
<g shape-rendering="crispEdges">
<path d="M16,161.5 H200" stroke="#9400d3"/>
<path d="M16,422.5 H200" stroke="#9400d3"/>
<path d="M16,268.5 H66" stroke="#ff4500"/>
<path d="M16,361.5 H66" stroke="#f4a460"/>
<path d="M203,133.5 H258" stroke="#ff4500"/>
<path d="M258,133.5 H392" stroke="#00bfff"/>
<path d="M203,290.5 H258" stroke="#f4a460"/>
<path d="M203,570.5 H392" stroke="#00bfff"/>
<path d="M394,325.5 H450" stroke="#ff4500"/>
<path d="M394,402.5 H450" stroke="#f4a460"/>
<path d="M394,405.5 H585" stroke="#9400d3"/>
<path d="M394,252.5 H583" stroke="#9400d3"/>
<path d="M16,262.5 H613" stroke="#778899"/>
</g>
<path d="M16.5,297V305M18.5,305V313M20.5,305V319M22.5,310V328M24.5,323V332M26.5,321V342M28.5,325V340M30.5,334V350M32.5,338V345M34.5,336V349M36.5,330V358M38.5,336V357M40.5,332V354M42.5,315V345M44.5,310V332M46.5,315V339M48.5,319V341M50.5,332V353M52.5,346V351M54.5,345V351M56.5,338V355M58.5,336V357M60.5,342V354M62.5,348V355M64.5,353V357M66.5,351V360M68.5,358V364M70.5,365V372M72.5,362V376M74.5,370V383M76.5,366V388M78.5,385V394M80.5,373V410M82.5,361V417M84.5,373V412M86.5,358V390M88.5,347V379M90.5,349V393M92.5,353V405M94.5,362V399M96.5,373V383M98.5,351V373M100.5,341V374M102.5,344V354M104.5,329V341M106.5,325V347M108.5,325V341M110.5,310V336M112.5,299V321M114.5,291V311M116.5,269V296M118.5,250V272M120.5,226V251M122.5,228V277M124.5,256V269M126.5,260V285M128.5,269V278M130.5,257V274M132.5,288V304M134.5,312V357M136.5,318V347M138.5,322V348M140.5,318V337M142.5,314V334M144.5,285V306M146.5,252V287M148.5,243V260M150.5,233V266M152.5,230V265M154.5,180V261M156.5,188V264M158.5,178V248M160.5,212V259M162.5,237V253M164.5,267V278M166.5,278V300M168.5,272V324M170.5,272V309M172.5,299V318M174.5,294V340M176.5,314V337M178.5,321V331M180.5,304V330M182.5,299V313M184.5,281V297M186.5,263V271M188.5,229V257M190.5,216V237M192.5,188V232M194.5,200V239M196.5,185V251M198.5,180V241M200.5,158V247M202.5,191V224M204.5,173V226M206.5,164V201M208.5,146V176M210.5,137V172M212.5,136V169M214.5,141V172M216.5,143V164M218.5,142V153M220.5,139V164M222.5,147V165M224.5,154V179M226.5,170V181M228.5,167V185M230.5,177V199M232.5,186V211M234.5,200V208M236.5,207V220M238.5,209V223M240.5,211V224M242.5,214V219M244.5,212V218M246.5,206V238M248.5,210V247M250.5,217V250M252.5,236V256M254.5,246V264M256.5,272V284M258.5,270V296M260.5,287V301M262.5,284V293M264.5,280V289M266.5,278V296M268.5,281V299M270.5,284V301M272.5,271V307M274.5,278V302M276.5,277V297M278.5,278V287M280.5,274V291M282.5,262V287M284.5,245V276M286.5,244V273M288.5,224V261M290.5,226V248M292.5,224V240M294.5,227V245M296.5,247V269M298.5,263V279M300.5,249V294M302.5,259V277M304.5,255V286M306.5,271V285M308.5,275V296M310.5,267V305M312.5,275V296M314.5,283V312M316.5,269V305M318.5,278V299M320.5,266V298M322.5,262V298M324.5,309V347M328.5,378V414M330.5,369V430M332.5,374V419M334.5,362V407M336.5,334V375M338.5,330V392M340.5,341V370M342.5,347V365M344.5,346V365M346.5,351V377M348.5,337V372M350.5,344V370M352.5,356V378M354.5,362V379M356.5,354V384M358.5,363V374M360.5,354V372M362.5,361V373M364.5,350V374M366.5,350V367M368.5,353V372M370.5,368V378M372.5,367V383M374.5,375V391M376.5,379V396M378.5,375V389M380.5,374V381M382.5,359V381M384.5,352V379M386.5,364V372M388.5,360V380M390.5,349V379M394.5,379V398M396.5,376V399M398.5,371V396M400.5,353V383M402.5,342V367M404.5,338V359M406.5,336V351M408.5,337V344M410.5,338V344M412.5,338V344M414.5,335V341M416.5,335V340M418.5,335V339M420.5,333V341M422.5,331V336M424.5,333V341M426.5,330V338M428.5,332V339M430.5,339V348M432.5,336V346M434.5,338V355M436.5,348V357M438.5,353V363M440.5,352V361M442.5,349V364M444.5,355V361M446.5,361V374M448.5,361V373M450.5,370V381M452.5,375V393M454.5,383V399M456.5,390V399M458.5,392V404M460.5,388V401M462.5,389V393M464.5,384V395M466.5,365V381M468.5,365V381M470.5,361V384M472.5,360V381M474.5,358V382M476.5,355V365M478.5,344V366M480.5,341V353M326.5,168V569M392.5,341V488M482.5,321V337M484.5,318V327M486.5,288V330M488.5,252V325M490.5,255V269" stroke="#00ff00" stroke-width="1" shape-rendering="crispEdges"/>
<path d="M14.0,663.8 C17.1,664.2 28.1,665.9 32.7,666.2 C37.4,666.4 37.4,666.1 42.1,665.5 C46.8,664.8 55.0,662.7 60.9,662.2 C66.7,661.7 73.4,662.4 77.3,662.7 C81.2,662.9 80.8,664.0 84.3,663.8 C87.8,663.6 93.7,663.6 98.4,661.5 C103.1,659.3 108.5,654.1 112.4,650.9 C116.3,647.8 118.7,644.8 121.8,642.7 C124.9,640.7 128.1,638.7 131.2,638.5 C134.3,638.3 137.4,641.8 140.6,641.6 C143.7,641.3 146.6,638.8 149.9,636.9 C153.2,634.9 157.3,630.0 160.5,629.8 C163.6,629.6 165.4,633.7 168.7,635.7 C172.0,637.7 177.3,640.8 180.4,641.6 C183.5,642.3 184.3,642.1 187.4,640.4 C190.5,638.6 194.8,633.6 199.1,631.0 C203.4,628.5 208.9,626.7 213.2,625.2 C217.5,623.6 221.0,621.1 224.9,621.6 C228.8,622.2 232.7,626.5 236.6,628.7 C240.5,630.8 244.5,631.8 248.4,634.5 C252.3,637.3 256.2,642.3 260.1,645.1 C264.0,647.8 268.3,649.6 271.8,650.9 C275.3,652.3 277.3,654.1 281.2,653.3 C285.1,652.5 290.9,647.2 295.2,646.2 C299.5,645.3 303.8,646.8 306.9,647.4 C310.1,648.0 311.0,649.6 314.0,649.8 C316.9,650.0 321.8,647.2 324.5,648.6 C327.3,650.0 327.9,655.8 330.4,658.0 C332.9,660.1 335.9,660.7 339.8,661.5 C343.7,662.3 349.5,662.8 353.8,662.7 C358.1,662.5 361.3,660.7 365.6,660.3 C369.9,659.9 374.2,660.6 379.6,660.3 C385.1,660.0 392.9,660.0 398.4,658.7 C403.8,657.3 407.7,654.1 412.4,652.1 C417.1,650.2 421.0,647.8 426.5,646.9 C432.0,646.1 439.8,646.0 445.2,646.9 C450.7,647.9 454.6,651.8 459.3,652.8 C464.0,653.8 469.5,653.5 473.4,652.8 C477.3,652.1 480.0,650.5 482.7,648.6 C485.5,646.6 488.6,642.3 489.8,641.1" fill="none" stroke="#008000" stroke-width="2" stroke-linejoin="round" />
<path d="M14.0,662.7 C15.6,662.8 20.2,663.4 23.4,663.8 C26.5,664.2 30.4,665.4 32.7,665.0 C35.1,664.6 35.9,661.7 37.4,661.5 C39.0,661.3 40.4,665.6 42.1,663.8 C43.9,662.1 46.0,651.5 48.0,650.9 C49.9,650.3 51.9,659.5 53.8,660.3 C55.8,661.1 57.4,656.2 59.7,655.6 C62.0,655.0 65.2,656.2 67.9,656.8 C70.6,657.4 73.8,656.6 76.1,659.1 C78.4,661.7 79.8,673.2 82.0,672.0 C84.1,670.9 86.8,654.4 89.0,652.1 C91.1,649.8 92.7,660.1 94.9,658.0 C97.0,655.8 98.6,645.5 101.9,639.2 C105.2,633.0 111.5,627.1 114.8,620.5 C118.1,613.8 119.7,600.7 121.8,599.4 C124.0,598.0 125.7,609.1 127.7,612.3 C129.6,615.4 131.4,611.9 133.5,618.1 C135.7,624.4 138.6,646.6 140.6,649.8 C142.5,652.9 143.3,644.5 145.2,636.9 C147.2,629.3 150.3,609.9 152.3,604.1 C154.2,598.2 155.4,600.9 157.0,601.7 C158.5,602.5 160.1,602.9 161.6,608.7 C163.2,614.6 163.8,626.7 166.3,636.9 C168.9,647.0 173.8,667.3 176.9,669.7 C180.0,672.0 182.5,659.5 185.1,650.9 C187.6,642.3 190.2,625.7 192.1,618.1 C194.1,610.5 194.8,605.2 196.8,605.2 C198.8,605.2 201.9,617.1 203.8,618.1 C205.8,619.1 206.6,613.0 208.5,611.1 C210.5,609.1 213.2,607.2 215.5,606.4 C217.9,605.6 220.2,604.1 222.6,606.4 C224.9,608.7 226.9,614.2 229.6,620.5 C232.3,626.7 236.2,638.8 239.0,643.9 C241.7,649.0 242.5,643.9 246.0,650.9 C249.5,658.0 256.2,681.2 260.1,686.1 C264.0,691.0 267.1,681.4 269.4,680.2 C271.8,679.1 271.8,681.6 274.1,679.1 C276.5,676.5 280.8,671.6 283.5,665.0 C286.2,658.4 288.6,644.1 290.5,639.2 C292.5,634.3 293.7,635.5 295.2,635.7 C296.8,635.9 298.2,637.5 299.9,640.4 C301.7,643.3 303.4,651.9 305.8,653.3 C308.1,654.6 312.2,647.8 314.0,648.6 C315.7,649.4 315.4,658.0 316.3,658.0 C317.3,658.0 318.6,651.5 319.9,648.6 C321.1,645.7 322.9,640.0 323.8,640.4 C324.8,640.8 324.6,641.0 325.7,650.9 C326.8,660.9 329.2,692.3 330.4,700.1 C331.6,708.0 331.6,701.5 332.7,697.8 C333.9,694.1 335.9,680.6 337.4,677.9 C339.0,675.1 340.4,683.0 342.1,681.4 C343.9,679.8 346.2,670.3 348.0,668.5 C349.7,666.8 350.9,670.7 352.7,670.9 C354.4,671.0 356.6,672.0 358.5,669.7 C360.5,667.3 362.2,659.5 364.4,656.8 C366.5,654.1 369.5,652.7 371.4,653.3 C373.4,653.9 374.0,661.1 376.1,660.3 C378.3,659.5 382.2,650.9 384.3,648.6 C386.5,646.2 387.2,644.7 389.0,646.2 C390.8,647.8 392.9,657.2 394.9,658.0 C396.8,658.7 398.8,655.2 400.7,650.9 C402.7,646.6 405.0,635.5 406.6,632.2 C408.1,628.9 408.3,631.0 410.1,631.0 C411.8,631.0 415.0,632.2 417.1,632.2 C419.3,632.2 420.6,630.6 423.0,631.0 C425.3,631.4 429.0,633.6 431.2,634.5 C433.3,635.5 434.3,635.5 435.9,636.9 C437.4,638.2 438.8,641.6 440.6,642.7 C442.3,643.9 444.1,641.0 446.4,643.9 C448.8,646.8 452.5,657.0 454.6,660.3 C456.8,663.6 457.7,663.4 459.3,663.8 C460.9,664.2 462.4,664.0 464.0,662.7 C465.6,661.3 466.9,657.0 468.7,655.6 C470.4,654.3 472.6,657.2 474.5,654.4 C476.5,651.7 478.2,644.5 480.4,639.2 C482.5,633.9 485.8,627.9 487.4,622.8 C489.1,617.7 489.8,611.1 490.2,608.7" fill="none" stroke="#ff0000" stroke-width="2" stroke-linejoin="round" />
<line x1="220" y1="128" x2="605" y2="266" stroke="#ff0000" stroke-width="4.5" stroke-linecap="round"/>
<line x1="331" y1="194" x2="603" y2="201" stroke="#ffa000" stroke-width="4.5"/><circle cx="331" cy="194" r="4.5" fill="#ffa000"/>
<ellipse cx="496.3" cy="232.5" rx="48.5" ry="42" fill="none" stroke="#1e8c1e" stroke-width="2"/>
<polygon points="76.5,286.0 67.0,286.0 70.2,282.8 64.5,277.2 67.5,274.2 73.2,279.8 76.5,276.5" fill="#ff0000"/>
<polygon points="124.5,275.0 115.0,275.0 118.2,278.2 112.5,283.8 115.5,286.8 121.2,281.2 124.5,284.5" fill="#ff0000"/>
<polygon points="270.0,150.0 261.4,150.0 264.3,147.1 259.2,142.1 261.9,139.4 267.0,144.4 270.0,141.4" fill="#ff0000"/>
<polygon points="486.5,327.0 477.0,327.0 480.2,330.2 474.5,335.8 477.5,338.8 483.2,333.2 486.5,336.5" fill="#ff0000"/>
<g shape-rendering="crispEdges">
<rect x="671.5" y="105.5" width="558" height="398" fill="none" stroke="#000"/>
<rect x="671.5" y="505.5" width="558" height="88" fill="none" stroke="#000"/>
<rect x="671.5" y="596.5" width="558" height="108" fill="none" stroke="#000"/>
<path d="M740.5,106 V503" stroke="#000" stroke-dasharray="3,3"/>
<path d="M740.5,506 V593" stroke="#000" stroke-dasharray="3,3"/>
<path d="M740.5,597 V704" stroke="#000" stroke-dasharray="3,3"/>
<path d="M860.5,106 V503" stroke="#000" stroke-dasharray="3,3"/>
<path d="M860.5,506 V593" stroke="#000" stroke-dasharray="3,3"/>
<path d="M860.5,597 V704" stroke="#000" stroke-dasharray="3,3"/>
<path d="M980.5,106 V503" stroke="#000" stroke-dasharray="3,3"/>
<path d="M980.5,506 V593" stroke="#000" stroke-dasharray="3,3"/>
<path d="M980.5,597 V704" stroke="#000" stroke-dasharray="3,3"/>
<path d="M1100.5,106 V503" stroke="#000" stroke-dasharray="3,3"/>
<path d="M1100.5,506 V593" stroke="#000" stroke-dasharray="3,3"/>
<path d="M1100.5,597 V704" stroke="#000" stroke-dasharray="3,3"/>
<path d="M672,553.5 H1229" stroke="#000" stroke-dasharray="3,3"/>
<path d="M673,619.5 H1229" stroke="#000" stroke-width="1" stroke-dasharray="18,6"/>
<path d="M673,651.5 H1229" stroke="#000" stroke-width="1" stroke-dasharray="18,6"/>
<path d="M673,683.5 H1229" stroke="#000" stroke-width="1" stroke-dasharray="18,6"/>
<path d="M1230,137.5 h3" stroke="#000"/>
<text x="1235.8" y="141" fill="#000000" font-size="10" textLength="32.5" lengthAdjust="spacingAndGlyphs">1.07885</text>
<path d="M1230,170.5 h3" stroke="#000"/>
<text x="1235.8" y="174" fill="#000000" font-size="10" textLength="32.5" lengthAdjust="spacingAndGlyphs">1.07730</text>
<path d="M1230,203.5 h3" stroke="#000"/>
<text x="1235.8" y="207" fill="#000000" font-size="10" textLength="32.5" lengthAdjust="spacingAndGlyphs">1.07570</text>
<path d="M1230,236.5 h3" stroke="#000"/>
<text x="1235.8" y="240.5" fill="#000000" font-size="10" textLength="32.5" lengthAdjust="spacingAndGlyphs">1.07415</text>
<path d="M1230,269.5 h3" stroke="#000"/>
<text x="1235.8" y="273" fill="#000000" font-size="10" textLength="32.5" lengthAdjust="spacingAndGlyphs">1.07260</text>
<path d="M1230,302.5 h3" stroke="#000"/>
<text x="1235.8" y="306" fill="#000000" font-size="10" textLength="32.5" lengthAdjust="spacingAndGlyphs">1.07100</text>
<path d="M1230,335.5 h3" stroke="#000"/>
<text x="1235.8" y="339" fill="#000000" font-size="10" textLength="32.5" lengthAdjust="spacingAndGlyphs">1.06945</text>
<path d="M1230,368.5 h3" stroke="#000"/>
<text x="1235.8" y="372" fill="#000000" font-size="10" textLength="32.5" lengthAdjust="spacingAndGlyphs">1.06790</text>
<path d="M1230,401.5 h3" stroke="#000"/>
<text x="1235.8" y="405" fill="#000000" font-size="10" textLength="32.5" lengthAdjust="spacingAndGlyphs">1.06630</text>
<path d="M1230,434.5 h3" stroke="#000"/>
<text x="1235.8" y="438" fill="#000000" font-size="10" textLength="32.5" lengthAdjust="spacingAndGlyphs">1.06475</text>
<path d="M1230,467.5 h3" stroke="#000"/>
<text x="1235.8" y="471" fill="#000000" font-size="10" textLength="32.5" lengthAdjust="spacingAndGlyphs">1.06320</text>
<path d="M1230,500.5 h3" stroke="#000"/>
<text x="1235.8" y="504" fill="#000000" font-size="10" textLength="32.5" lengthAdjust="spacingAndGlyphs">1.06160</text>
<rect x="1231" y="214" width="40" height="8" fill="#000"/>
<text x="1235.8" y="222" fill="#ffffff" font-size="10" textLength="32.5" lengthAdjust="spacingAndGlyphs">1.07492</text>
<rect x="1231" y="221" width="40" height="11" fill="#ff0000"/>
<text x="1235.8" y="230.5" fill="#ffffff" font-size="10" textLength="32.5" lengthAdjust="spacingAndGlyphs">1.07461</text>
<path d="M1230,507.5 h3" stroke="#000"/>
<text x="1233" y="516.5" fill="#000" font-size="10" textLength="38" lengthAdjust="spacingAndGlyphs">0.006962</text>
<text x="1233" y="557" fill="#000" font-size="10" textLength="18" lengthAdjust="spacingAndGlyphs">0.00</text>
<text x="1233" y="592" fill="#000" font-size="10" textLength="38" lengthAdjust="spacingAndGlyphs">-0.006189</text>
<text x="1233.5" y="608" fill="#000" font-size="10" textLength="6" lengthAdjust="spacingAndGlyphs">0</text>
<path d="M1230,619.5 h3" stroke="#000"/>
<text x="1233" y="623" fill="#000" font-size="10" textLength="14" lengthAdjust="spacingAndGlyphs">-20</text>
<path d="M1230,651.5 h3" stroke="#000"/>
<text x="1233" y="655" fill="#000" font-size="10" textLength="14" lengthAdjust="spacingAndGlyphs">-50</text>
<path d="M1230,683.5 h3" stroke="#000"/>
<text x="1233" y="687" fill="#000" font-size="10" textLength="14" lengthAdjust="spacingAndGlyphs">-80</text>
<path d="M1230,698.5 h3" stroke="#000"/>
<text x="1233" y="702" fill="#000" font-size="10" textLength="19.5" lengthAdjust="spacingAndGlyphs">-100</text>
<path d="M672.5,705 v3" stroke="#000"/>
<text x="671.5" y="718" fill="#000" font-size="10" textLength="50" lengthAdjust="spacingAndGlyphs">25 Jun 2014</text>
<path d="M736.5,705 v3" stroke="#000"/>
<text x="735.5" y="718" fill="#000" font-size="10" textLength="53" lengthAdjust="spacingAndGlyphs">27 Jun 20:00</text>
<path d="M800.5,705 v3" stroke="#000"/>
<text x="799.5" y="718" fill="#000" font-size="10" textLength="46" lengthAdjust="spacingAndGlyphs">2 Jul 12:00</text>
<path d="M864.5,705 v3" stroke="#000"/>
<text x="863.5" y="718" fill="#000" font-size="10" textLength="46" lengthAdjust="spacingAndGlyphs">7 Jul 04:00</text>
<path d="M928.5,705 v3" stroke="#000"/>
<text x="927.5" y="718" fill="#000" font-size="10" textLength="46" lengthAdjust="spacingAndGlyphs">9 Jul 20:00</text>
<path d="M992.5,705 v3" stroke="#000"/>
<text x="991.5" y="718" fill="#000" font-size="10" textLength="52" lengthAdjust="spacingAndGlyphs">14 Jul 12:00</text>
<path d="M1056.5,705 v3" stroke="#000"/>
<text x="1055.5" y="718" fill="#000" font-size="10" textLength="52" lengthAdjust="spacingAndGlyphs">17 Jul 04:00</text>
<path d="M672,220.5 H1229" stroke="#778899"/>
<path d="M672,226.5 H1229" stroke="#ff0000"/>
</g>
<path d="M675,112 h7.5 l-3.75,4.2 z" fill="#000"/>
<text x="687" y="117" fill="#000" font-size="10" textLength="56" lengthAdjust="spacingAndGlyphs">USDCAD,H4</text>
<text x="749" y="117" fill="#000" font-size="10" textLength="32.5" lengthAdjust="spacingAndGlyphs">1.07488</text>
<text x="785" y="117" fill="#000" font-size="10" textLength="32.5" lengthAdjust="spacingAndGlyphs">1.07502</text>
<text x="821" y="117" fill="#000" font-size="10" textLength="32.5" lengthAdjust="spacingAndGlyphs">1.07485</text>
<text x="857" y="117" fill="#000" font-size="10" textLength="32.5" lengthAdjust="spacingAndGlyphs">1.07492</text>
<text x="677" y="518.5" fill="#000" font-size="10" textLength="80" lengthAdjust="spacingAndGlyphs">AO_Zotik 0.000044</text>
<text x="677" y="609" fill="#000" font-size="10" textLength="160" lengthAdjust="spacingAndGlyphs">WPR_VSmark(21<tspan fill="#e8a040">|</tspan>55<tspan fill="#e8a040">|</tspan>77<tspan fill="#e8a040">|</tspan>277) -62.0477</text>
<path d="M1112,105 h9 l-4.5,5 z" fill="#708090"/>
<g shape-rendering="crispEdges"><path d="M672.5,216V230M676.5,217V229M680.5,225V279M684.5,260V285M688.5,271V287M692.5,271V283M696.5,274V291M700.5,284V311M704.5,297V314M708.5,281V344M712.5,337V354M716.5,338V355M720.5,334V358M724.5,331V370M728.5,337V371M732.5,347V398M736.5,389V408M740.5,385V405M744.5,373V397M748.5,347V383M752.5,332V390M756.5,346V426M760.5,384V397M764.5,377V395M768.5,373V395M772.5,373V393M776.5,388V424M780.5,417V459M784.5,448V473M788.5,453V472M792.5,451V469M796.5,443V472M800.5,421V464M804.5,387V427M808.5,389V406M812.5,385V403M816.5,381V395M820.5,374V403M824.5,366V449M828.5,366V488M832.5,402V490M836.5,447V480M840.5,438V472M844.5,439V469M848.5,438V469M852.5,429V464M856.5,417V451M860.5,406V439M864.5,394V411M868.5,403V435M872.5,431V465M876.5,396V463M880.5,369V402M884.5,357V368M888.5,337V372M892.5,337V375M896.5,346V385M900.5,365V401M904.5,359V386M908.5,366V384M912.5,359V378M916.5,360V388M920.5,373V403M924.5,377V432M928.5,413V448M932.5,417V436M936.5,415V430M940.5,399V429M944.5,381V402M948.5,375V413M952.5,400V435M956.5,421V443M960.5,435V460M964.5,448V465M968.5,315V467M972.5,283V325M976.5,260V277M980.5,248V268M984.5,237V257M988.5,226V248M992.5,238V268M996.5,259V297M1000.5,286V302M1004.5,282V300M1008.5,269V285M1012.5,247V278M1016.5,248V272M1020.5,186V276M1024.5,189V234M1028.5,193V210M1032.5,189V196M1036.5,176V198M1040.5,167V210M1044.5,132V264M1048.5,201V265M1052.5,223V258M1056.5,238V263M1060.5,238V253M1064.5,207V246M1068.5,196V246M1072.5,191V243M1076.5,184V229M1080.5,197V229M1084.5,207V237M1088.5,193V300M1092.5,229V271M1096.5,237V281M1100.5,239V265M1104.5,238V260M1108.5,221V260M1112.5,219V228" stroke="#00ff00"/><path d="M671.5,219h2v7h-2zM675.5,220h2v6h-2zM683.5,267h2v16h-2zM687.5,273h2v11h-2zM691.5,272h2v10h-2zM703.5,298h2v14h-2zM707.5,287h2v50h-2zM711.5,342h2v11h-2zM715.5,341h2v10h-2zM723.5,342h2v23h-2zM727.5,340h2v28h-2zM747.5,357h2v24h-2zM751.5,347h2v40h-2zM755.5,357h2v53h-2zM771.5,377h2v11h-2zM779.5,419h2v28h-2zM795.5,445h2v24h-2zM803.5,399h2v21h-2zM815.5,385h2v10h-2zM819.5,381h2v20h-2zM823.5,390h2v42h-2zM827.5,376h2v93h-2zM835.5,457h2v15h-2zM859.5,414h2v16h-2zM867.5,409h2v17h-2zM871.5,439h2v22h-2zM879.5,378h2v17h-2zM887.5,345h2v22h-2zM891.5,345h2v20h-2zM895.5,354h2v22h-2zM899.5,370h2v22h-2zM911.5,364h2v9h-2zM915.5,366h2v15h-2zM919.5,375h2v20h-2zM923.5,389h2v35h-2zM927.5,421h2v19h-2zM955.5,425h2v13h-2zM971.5,291h2v31h-2zM991.5,247h2v15h-2zM995.5,270h2v25h-2zM1003.5,285h2v10h-2zM1011.5,256h2v17h-2zM1019.5,212h2v48h-2zM1031.5,190h2v4h-2zM1035.5,181h2v11h-2zM1043.5,164h2v85h-2zM1055.5,243h2v14h-2zM1059.5,241h2v9h-2zM1075.5,192h2v25h-2zM1079.5,203h2v24h-2zM1083.5,211h2v20h-2zM1087.5,216h2v66h-2zM1091.5,235h2v30h-2zM1095.5,242h2v34h-2z" fill="#ffffff" stroke="#00ff00"/><path d="M679.5,234h2v30h-2zM695.5,279h2v8h-2zM699.5,291h2v18h-2zM719.5,341h2v12h-2zM731.5,353h2v35h-2zM735.5,393h2v12h-2zM739.5,390h2v12h-2zM743.5,377h2v14h-2zM759.5,385h2v11h-2zM763.5,379h2v12h-2zM767.5,380h2v13h-2zM775.5,397h2v18h-2zM783.5,451h2v17h-2zM787.5,456h2v11h-2zM791.5,453h2v14h-2zM799.5,434h2v27h-2zM807.5,391h2v12h-2zM811.5,388h2v13h-2zM831.5,425h2v54h-2zM839.5,443h2v23h-2zM843.5,444h2v21h-2zM847.5,441h2v24h-2zM851.5,439h2v18h-2zM855.5,422h2v27h-2zM863.5,398h2v9h-2zM875.5,412h2v36h-2zM883.5,358h2v8h-2zM903.5,365h2v13h-2zM907.5,369h2v12h-2zM931.5,418h2v16h-2zM935.5,418h2v10h-2zM939.5,405h2v22h-2zM943.5,383h2v17h-2zM947.5,380h2v29h-2zM951.5,402h2v27h-2zM959.5,442h2v17h-2zM963.5,450h2v12h-2zM967.5,322h2v140h-2zM975.5,262h2v12h-2zM979.5,253h2v11h-2zM983.5,241h2v13h-2zM987.5,231h2v14h-2zM999.5,289h2v9h-2zM1007.5,272h2v12h-2zM1015.5,254h2v13h-2zM1023.5,195h2v26h-2zM1027.5,195h2v12h-2zM1039.5,175h2v30h-2zM1047.5,207h2v39h-2zM1051.5,230h2v22h-2zM1063.5,212h2v29h-2zM1067.5,205h2v34h-2zM1071.5,201h2v39h-2zM1099.5,240h2v17h-2zM1103.5,241h2v16h-2zM1107.5,232h2v24h-2zM1111.5,221h2v5h-2z" fill="#000000" stroke="#00ff00"/></g>
<path d="M671.8,561.0 C676.8,559.9 690.5,556.3 701.8,554.6 C713.0,552.9 726.1,551.2 739.3,550.9 C752.4,550.6 771.1,552.2 780.5,552.8 C789.9,553.3 788.3,554.6 795.5,554.1 C802.7,553.6 812.7,550.6 823.6,549.8 C834.6,548.9 849.6,549.7 861.1,549.0 C872.7,548.3 886.5,546.3 893.0,545.6 C899.5,545.0 897.0,545.4 900.0,545.3 C903.0,545.1 907.5,544.6 911.3,544.7 C915.0,544.8 918.4,545.2 922.5,546.0 C926.6,546.8 930.6,548.7 935.6,549.4 C940.6,550.1 947.5,550.0 952.5,550.3 C957.5,550.6 960.9,551.5 965.6,551.3 C970.3,551.0 975.9,549.7 980.6,549.0 C985.3,548.3 989.1,547.3 993.8,547.1 C998.4,546.9 1003.1,548.4 1008.8,547.9 C1014.4,547.4 1022.2,544.8 1027.5,544.1 C1032.8,543.4 1036.3,543.3 1040.6,543.8 C1045.0,544.2 1049.1,545.6 1053.8,546.6 C1058.4,547.5 1063.4,548.3 1068.8,549.4 C1074.1,550.5 1080.3,551.6 1085.6,553.1 C1090.9,554.7 1096.3,557.7 1100.6,558.8 C1105.0,559.8 1110.0,559.5 1111.9,559.7" fill="none" stroke="#000000" stroke-width="1" stroke-linejoin="round" />
<path d="M671.8,583.1 C673.0,582.9 674.3,582.0 679.3,581.8 C684.3,581.7 695.5,581.7 701.8,582.2 C708.0,582.7 710.5,584.0 716.8,584.6 C723.0,585.3 733.0,586.2 739.3,585.9 C745.5,585.7 748.6,583.7 754.3,583.1 C759.9,582.6 767.4,582.5 773.0,582.8 C778.6,583.0 783.3,584.3 788.0,584.6 C792.7,585.0 797.4,585.6 801.1,585.0 C804.9,584.4 806.8,582.4 810.5,581.3 C814.3,580.2 817.4,579.1 823.6,578.4 C829.9,577.8 841.4,577.8 848.0,577.1 C854.6,576.5 858.6,575.4 863.0,574.7 C867.4,574.0 869.3,574.2 874.3,572.8 C879.3,571.4 888.7,567.7 893.0,566.3 C897.3,564.8 896.3,564.9 900.0,564.0 C903.7,563.1 907.2,561.6 915.0,561.0 C922.8,560.4 938.6,560.1 946.9,560.3 C955.2,560.4 960.0,562.8 964.7,562.1 C969.4,561.4 971.1,558.2 975.0,555.9 C978.9,553.7 983.1,550.2 988.1,548.4 C993.1,546.7 999.7,546.9 1005.0,545.6 C1010.3,544.4 1013.8,542.6 1020.0,540.9 C1026.3,539.3 1036.9,536.4 1042.5,535.9 C1048.1,535.3 1046.9,537.4 1053.8,537.8 C1060.6,538.1 1076.6,537.4 1083.8,537.8 C1090.9,538.1 1092.0,539.5 1096.9,540.0 C1101.7,540.5 1110.2,540.8 1112.8,540.9" fill="none" stroke="#008000" stroke-width="2.2" stroke-linejoin="round" />
<path d="M671.8,583.1 C672.8,582.7 675.5,580.0 678.3,580.3 C681.1,580.6 684.7,584.7 688.6,585.0 C692.5,585.3 698.0,582.2 701.8,582.2 C705.5,582.2 708.3,583.9 711.1,585.0 C713.9,586.1 715.5,588.9 718.6,588.8 C721.8,588.6 726.8,584.7 729.9,584.1 C733.0,583.4 734.9,584.6 737.4,585.0 C739.9,585.4 742.1,588.1 744.9,586.5 C747.7,584.9 750.8,577.2 754.3,575.6 C757.7,574.1 762.1,577.4 765.5,577.1 C768.9,576.8 772.1,573.1 774.9,573.8 C777.7,574.4 779.9,578.6 782.4,581.3 C784.9,583.9 787.1,588.8 789.9,589.7 C792.7,590.6 795.8,590.4 799.3,586.5 C802.7,582.6 806.8,571.0 810.5,566.3 C814.3,561.5 818.6,558.4 821.8,557.8 C824.9,557.2 826.4,560.2 829.3,562.5 C832.1,564.8 835.8,571.1 838.6,571.9 C841.4,572.7 843.0,568.8 846.1,567.2 C849.3,565.6 854.3,565.0 857.4,562.5 C860.5,560.0 862.1,553.4 864.9,552.2 C867.7,550.9 871.8,554.8 874.3,555.0 C876.8,555.2 878.0,555.6 879.9,553.1 C881.8,550.6 883.3,543.1 885.5,540.0 C887.7,536.9 890.6,535.0 893.0,534.4 C895.4,533.8 897.9,535.4 900.0,536.3 C902.1,537.1 903.1,539.0 905.6,539.6 C908.1,540.3 912.5,539.5 915.0,540.0 C917.5,540.5 917.8,540.0 920.6,542.8 C923.4,545.6 928.8,554.5 931.9,556.9 C935.0,559.3 936.3,558.3 939.4,557.3 C942.5,556.2 947.8,550.7 950.6,550.3 C953.4,549.9 953.9,552.8 956.3,555.0 C958.6,557.2 962.2,565.3 964.7,563.4 C967.2,561.6 969.2,550.5 971.3,543.8 C973.3,537.0 975.3,528.1 976.9,523.1 C978.4,518.1 979.1,516.0 980.6,513.8 C982.2,511.5 984.1,509.6 986.3,509.6 C988.4,509.6 991.3,511.5 993.8,513.8 C996.3,516.0 998.9,520.5 1001.3,523.1 C1003.6,525.8 1005.3,529.4 1007.8,529.7 C1010.3,530.0 1013.0,527.5 1016.3,525.0 C1019.5,522.5 1024.4,517.0 1027.5,514.7 C1030.6,512.3 1032.2,510.9 1035.0,510.9 C1037.8,510.9 1040.9,511.1 1044.4,514.7 C1047.8,518.3 1052.5,529.0 1055.6,532.5 C1058.8,536.0 1060.6,535.4 1063.1,535.9 C1065.6,536.3 1068.1,535.6 1070.6,535.3 C1073.1,535.0 1075.6,533.7 1078.1,534.0 C1080.6,534.3 1083.1,534.6 1085.6,537.2 C1088.1,539.8 1090.9,546.3 1093.1,549.4 C1095.3,552.5 1096.9,554.7 1098.8,555.9 C1100.6,557.2 1102.2,557.4 1104.4,556.9 C1106.6,556.3 1110.6,553.4 1111.9,552.8" fill="none" stroke="#ff0000" stroke-width="2" stroke-linejoin="round" />
<polyline points="671.8,674.4 676.4,675.3 679.3,693.1 688.6,702.5 692.4,691.3 697.1,702.5 704.6,693.1 708.3,696.9 717.7,697.8 721.4,702.5 725.2,683.8 728.0,684.7 732.7,702.5 741.1,699.7 752.4,665.9 756.1,684.7 764.6,668.8 772.1,672.5 782.4,702.5 791.8,689.4 797.4,698.8 804.9,650.9 808.6,649.1 816.1,635.9 820.8,665.0 824.6,630.3 828.3,702.5 844.3,662.2 848.9,685.6 853.6,659.4 857.4,656.6 861.1,631.3 864.9,630.3 872.4,680.0 879.9,601.3 888.3,599.4 892.1,618.1 900.0,624.7 907.5,622.8 913.1,618.1 915.9,629.4 920.6,632.2 923.4,668.8 926.3,672.5 931.9,666.9 936.6,665.9 944.1,635.0 950.6,674.4 956.3,681.9 963.8,701.6 965.6,655.6 967.5,612.5 971.3,597.5 976.9,604.1 984.4,601.3 991.9,612.5 996.6,630.3 999.4,630.3 1006.9,618.1 1012.5,605.9 1016.3,609.7 1020.0,605.0 1023.8,614.4 1029.4,601.3 1035.0,602.2 1040.6,607.8 1044.4,627.5 1050.0,644.4 1056.6,672.5 1063.1,667.8 1076.3,646.3 1080.0,658.4 1084.7,650.0 1088.4,680.0 1093.1,668.8 1096.9,675.3 1100.6,665.9 1104.4,676.3 1108.1,654.7 1111.9,653.8" fill="none" stroke="#ff0000" stroke-width="1" stroke-linejoin="round" />
<polyline points="671.8,685.6 676.4,687.5 681.1,698.8 688.6,702.5 720.5,702.5 724.3,697.8 729.9,698.8 741.1,702.5 784.3,702.5 791.8,699.7 797.4,702.5 804.9,687.5 815.2,680.9 821.8,690.3 824.6,678.1 828.3,698.8 836.8,692.2 844.3,685.6 848.9,696.9 855.5,683.8 861.1,670.6 864.9,670.6 872.4,691.3 879.9,655.6 885.5,653.8 889.3,645.3 893.0,656.6 900.0,650.0 907.5,647.2 912.2,642.5 916.9,648.1 920.6,650.0 924.4,672.5 932.8,657.5 937.5,655.6 945.0,630.3 952.5,666.9 956.3,666.9 963.8,683.8 966.6,655.6 968.4,599.4 973.1,597.5 984.4,599.4 991.9,613.4 996.6,629.4 1000.3,630.3 1006.9,618.1 1012.5,605.9 1016.3,609.7 1020.0,605.0 1024.7,614.4 1029.4,601.3 1035.0,601.6 1040.6,607.8 1048.1,636.9 1053.8,635.0 1065.0,633.1 1076.3,620.9 1080.0,628.4 1084.7,624.7 1088.4,640.6 1093.1,635.0 1096.9,636.9 1100.6,632.2 1104.4,638.8 1108.1,627.5 1111.9,627.5" fill="none" stroke="#1e90ff" stroke-width="1" stroke-linejoin="round" />
<polyline points="671.8,690.3 676.4,691.3 682.1,700.6 688.6,703.4 720.5,702.5 726.1,697.8 741.1,702.5 752.4,689.4 756.1,694.1 765.5,692.2 774.9,695.0 784.3,702.5 797.4,702.5 804.9,691.3 818.0,687.5 824.6,685.6 828.3,700.6 846.1,695.9 851.8,692.2 863.0,687.5 872.4,697.8 879.9,676.3 888.3,668.8 893.0,674.4 900.0,676.3 907.5,676.3 912.2,672.5 918.8,665.0 924.4,681.9 932.8,677.2 937.5,676.3 945.0,662.2 950.6,675.3 956.3,681.9 963.8,692.2 967.5,633.1 971.3,620.0 978.8,613.4 984.4,602.2 991.9,613.4 996.6,628.4 1000.3,629.4 1006.9,618.1 1012.5,605.9 1016.3,609.7 1020.0,605.0 1024.7,614.4 1029.4,601.3 1035.0,601.6 1040.6,607.8 1048.1,637.8 1053.8,633.1 1065.0,632.2 1076.3,620.0 1080.0,627.5 1084.7,623.8 1088.4,639.7 1093.1,633.1 1096.9,635.0 1100.6,631.3 1104.4,636.9 1108.1,625.6 1111.9,625.3" fill="none" stroke="#9932cc" stroke-width="1" stroke-linejoin="round" />
<polyline points="671.8,695.0 676.4,695.9 681.1,701.6 688.6,703.4 720.5,703.4 726.1,698.8 731.8,703.4 741.1,703.4 752.4,695.9 756.1,698.8 765.5,697.8 774.9,698.8 784.3,703.4 797.4,702.5 804.9,695.0 818.0,693.1 824.6,691.3 828.3,702.5 846.1,700.6 851.8,696.9 863.0,693.1 872.4,700.6 879.9,687.5 888.3,683.8 893.0,687.5 900.0,688.4 911.3,685.6 918.8,688.4 924.4,695.0 936.6,693.1 945.0,688.4 951.6,695.9 956.3,696.5 963.8,700.6 967.5,680.0 973.1,670.6 980.6,668.8 986.3,666.9 995.6,675.9 1001.3,675.3 1010.6,668.8 1016.3,668.8 1020.0,660.9 1023.8,665.0 1029.4,659.0 1040.6,660.3 1048.1,669.7 1055.6,666.9 1065.0,666.5 1076.3,662.2 1080.0,664.1 1084.7,663.1 1088.4,670.6 1096.9,668.8 1100.6,668.4 1104.4,669.7 1108.1,664.1 1111.9,664.1" fill="none" stroke="#000000" stroke-width="2.6" stroke-linejoin="round" />
<defs><filter id="sh" x="-30%" y="-30%" width="160%" height="160%"><feGaussianBlur in="SourceAlpha" stdDeviation="2.6"/><feOffset dx="4" dy="4" result="b"/><feComponentTransfer><feFuncA type="linear" slope="0.45"/></feComponentTransfer><feFlood flood-color="#404040"/><feComposite in2="SourceGraphic" operator="over"/></filter><filter id="sh2" x="-30%" y="-30%" width="160%" height="160%"><feDropShadow dx="4" dy="4" stdDeviation="2.6" flood-color="#000" flood-opacity="0.38"/></filter></defs>
<g filter="url(#sh2)"><path d="M830.6,474.8 L886.4,355.5" stroke="#c00000" stroke-width="3.6"/><path d="M891.9,343.7 L891.4,360.0 L879.7,354.5 z" fill="#c00000"/></g>
<g filter="url(#sh2)"><path d="M903.5,351.1 L962.1,443.7" stroke="#c00000" stroke-width="3.6"/><path d="M969.0,454.7 L955.5,445.5 L966.5,438.5 z" fill="#c00000"/></g>
<g filter="url(#sh2)"><path d="M971.2,443.1 L1040.1,140.7" stroke="#c00000" stroke-width="3.6"/><path d="M1043.0,128.0 L1046.0,144.1 L1033.3,141.2 z" fill="#c00000"/></g>
<g filter="url(#sh2)"><path d="M1047.4,150.0 L1154.8,255.2" stroke="#c00000" stroke-width="3.6"/><path d="M1164.1,264.3 L1148.8,258.4 L1157.9,249.2 z" fill="#c00000"/></g>
<g filter="url(#sh2)"><path d="M1171.8,258.0 L1224.1,129.4" stroke="#c00000" stroke-width="3.6"/><path d="M1229.0,117.4 L1229.4,133.7 L1217.3,128.8 z" fill="#c00000"/></g>
<g filter="url(#sh2)"><path d="M1119.4,549.4 L1174.1,503.4" stroke="#c00000" stroke-width="3.6"/><path d="M1184.0,495.0 L1176.7,509.6 L1168.3,499.7 z" fill="#c00000"/></g>
<g filter="url(#sh2)"><line x1="1012" y1="301" x2="1240" y2="301" stroke="#ffa000" stroke-width="5"/><circle cx="1012" cy="301" r="5" fill="#ffa000"/></g>
<rect x="4" y="735" width="1276" height="19" fill="#e3e3e3" />
<line x1="0" y1="754.5" x2="1280" y2="754.5" stroke="#ffffff" stroke-width="1" />
<rect x="0" y="755" width="1280" height="2" fill="#e3e3e3" />
<line x1="5.5" y1="736" x2="5.5" y2="753" stroke="#808080" stroke-width="1" />
<path d="M88.5,738 V751" stroke="#606060" shape-rendering="crispEdges"/>
<path d="M176.5,738 V751" stroke="#606060" shape-rendering="crispEdges"/>
<path d="M261.5,738 V751" stroke="#606060" shape-rendering="crispEdges"/>
<path d="M340.5,738 V751" stroke="#606060" shape-rendering="crispEdges"/>
<path d="M428.5,738 V751" stroke="#606060" shape-rendering="crispEdges"/>
<path d="M508.5,738 V751" stroke="#606060" shape-rendering="crispEdges"/>
<path d="M596.5,738 V751" stroke="#606060" shape-rendering="crispEdges"/>
<path d="M676.5,738 V751" stroke="#606060" shape-rendering="crispEdges"/>
<path d="M764.5,738 V751" stroke="#606060" shape-rendering="crispEdges"/>
<path d="M844.5,738 V751" stroke="#606060" shape-rendering="crispEdges"/>
<path d="M1096.5,738 V751" stroke="#606060" shape-rendering="crispEdges"/>
<path d="M1176.5,738 V751" stroke="#606060" shape-rendering="crispEdges"/>
<path d="M932.5,754 V735.5 H1010.5 V754" fill="#ffffff" stroke="#000" shape-rendering="crispEdges"/>
<rect x="933" y="736" width="77" height="18" fill="#ffffff" />
<text x="18" y="746.8" fill="#8a8a90" font-size="11" textLength="58" lengthAdjust="spacingAndGlyphs">EURUSD,M5</text>
<text x="99" y="746.8" fill="#8a8a90" font-size="11" textLength="64" lengthAdjust="spacingAndGlyphs">EURUSD,M15</text>
<text x="185" y="746.8" fill="#8a8a90" font-size="11" textLength="63" lengthAdjust="spacingAndGlyphs">GBPUSD,M15</text>
<text x="271" y="746.8" fill="#8a8a90" font-size="11" textLength="58" lengthAdjust="spacingAndGlyphs">GBPUSD,H4</text>
<text x="350.5" y="746.8" fill="#8a8a90" font-size="11" textLength="65" lengthAdjust="spacingAndGlyphs">AUDUSD,M15</text>
<text x="438.5" y="746.8" fill="#8a8a90" font-size="11" textLength="59" lengthAdjust="spacingAndGlyphs">AUDUSD,H4</text>
<text x="519" y="746.8" fill="#8a8a90" font-size="11" textLength="64" lengthAdjust="spacingAndGlyphs">NZDUSD,M15</text>
<text x="606" y="746.8" fill="#8a8a90" font-size="11" textLength="57" lengthAdjust="spacingAndGlyphs">NZDUSD,H1</text>
<text x="686.5" y="746.8" fill="#8a8a90" font-size="11" textLength="65" lengthAdjust="spacingAndGlyphs">USDCHF,M15</text>
<text x="774.5" y="746.8" fill="#8a8a90" font-size="11" textLength="58" lengthAdjust="spacingAndGlyphs">USDCHF,H4</text>
<text x="854.5" y="746.8" fill="#8a8a90" font-size="11" textLength="65" lengthAdjust="spacingAndGlyphs">USDCAD,M15</text>
<text x="942" y="746.8" fill="#000000" font-size="11" textLength="59" lengthAdjust="spacingAndGlyphs">USDCAD,H4</text>
<text x="1021" y="746.8" fill="#8a8a90" font-size="11" textLength="63" lengthAdjust="spacingAndGlyphs">EURGBP,M15</text>
<text x="1107" y="746.8" fill="#8a8a90" font-size="11" textLength="57" lengthAdjust="spacingAndGlyphs">EURGBP,H4</text>
<text x="1186" y="746.8" fill="#8a8a90" font-size="11" textLength="61" lengthAdjust="spacingAndGlyphs">USDJPY,M15</text>
<path d="M1260,744.5 l4,-4 v8 z" fill="#a0a0a0"/><path d="M1276,744.5 l-4,-4 v8 z" fill="#000"/>
<rect x="0" y="0" width="4" height="757" fill="#1e1f24" />
<rect x="1" y="0" width="2" height="757" fill="#66708e" />
</svg></body></html>
